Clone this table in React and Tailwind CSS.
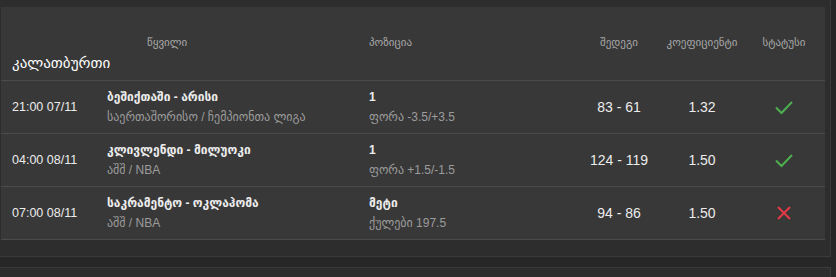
const rows = [
  {
    time: "21:00 07/11",
    match: "ბეშიქთაში - არისი",
    league: "საერთაშორისო / ჩემპიონთა ლიგა",
    pick: "1",
    market: "ფორა -3.5/+3.5",
    score: "83 - 61",
    odds: "1.32",
    won: true,
  },
  {
    time: "04:00 08/11",
    match: "კლივლენდი - მილუოკი",
    league: "აშშ / NBA",
    pick: "1",
    market: "ფორა +1.5/-1.5",
    score: "124 - 119",
    odds: "1.50",
    won: true,
  },
  {
    time: "07:00 08/11",
    match: "საკრამენტო - ოკლაჰომა",
    league: "აშშ / NBA",
    pick: "მეტი",
    market: "ქულები 197.5",
    score: "94 - 86",
    odds: "1.50",
    won: false,
  },
];

const cols = "grid grid-cols-[95px_262px_209px_82px_84px_80px]";

const Check = () => (
  <svg width="20" height="16" viewBox="0 0 20 16" fill="none">
    <path d="M2 8.5 L7.5 14 L18 3" stroke="#4caf50" strokeWidth="2" />
  </svg>
);

const Cross = () => (
  <svg width="16" height="16" viewBox="0 0 16 16" fill="none">
    <path d="M2 2 L14 14 M14 2 L2 14" stroke="#e53945" strokeWidth="2" />
  </svg>
);

export default function App() {
  return (
    <div className="min-h-[277px] w-[836px] bg-[#272727] font-['Liberation_Sans','DejaVu_Sans',sans-serif]">
      <div className="w-[831px] border-r border-b border-[#3a3a3a] bg-[#2d2d2d] pt-[7px] pb-4 pl-px">
        <div className="w-[824px] bg-[#383838]">
          <div className="border-b border-[#4b4b4b] pt-[29px] pb-[7px] pl-[11px]">
            <div className={`${cols} text-[11px] leading-3 text-[#a8a8a8]`}>
              <div></div>
              <div className="pl-10">წყვილი</div>
              <div>პოზიცია</div>
              <div className="text-center">შედეგი</div>
              <div className="text-center">კოეფიციენტი</div>
              <div className="text-center">სტატუსი</div>
            </div>
            <div className="mt-[5px] text-[15px] leading-5 text-white uppercase">
              კალათბურთი
            </div>
          </div>
          {rows.map((r) => (
            <div
              key={r.time}
              className={`${cols} h-[53px] items-center border-b border-[#4b4b4b] pl-[11px] text-[#ececec]`}
            >
              <div className="text-[12.5px]">{r.time}</div>
              <div className="text-xs leading-5">
                <div className="font-bold">{r.match}</div>
                <div className="text-[#9c9c9c]">{r.league}</div>
              </div>
              <div className="text-xs leading-5">
                <div className="font-bold">{r.pick}</div>
                <div className="text-[#9c9c9c]">{r.market}</div>
              </div>
              <div className="text-center text-sm">{r.score}</div>
              <div className="text-center text-sm">{r.odds}</div>
              <div className="flex justify-center">{r.won ? <Check /> : <Cross />}</div>
            </div>
          ))}
        </div>
      </div>
      <div className="mt-2.5 h-[11px] w-[831px] border-t border-r border-[#3a3a3a] bg-[#2d2d2d]"></div>
    </div>
  );
}
